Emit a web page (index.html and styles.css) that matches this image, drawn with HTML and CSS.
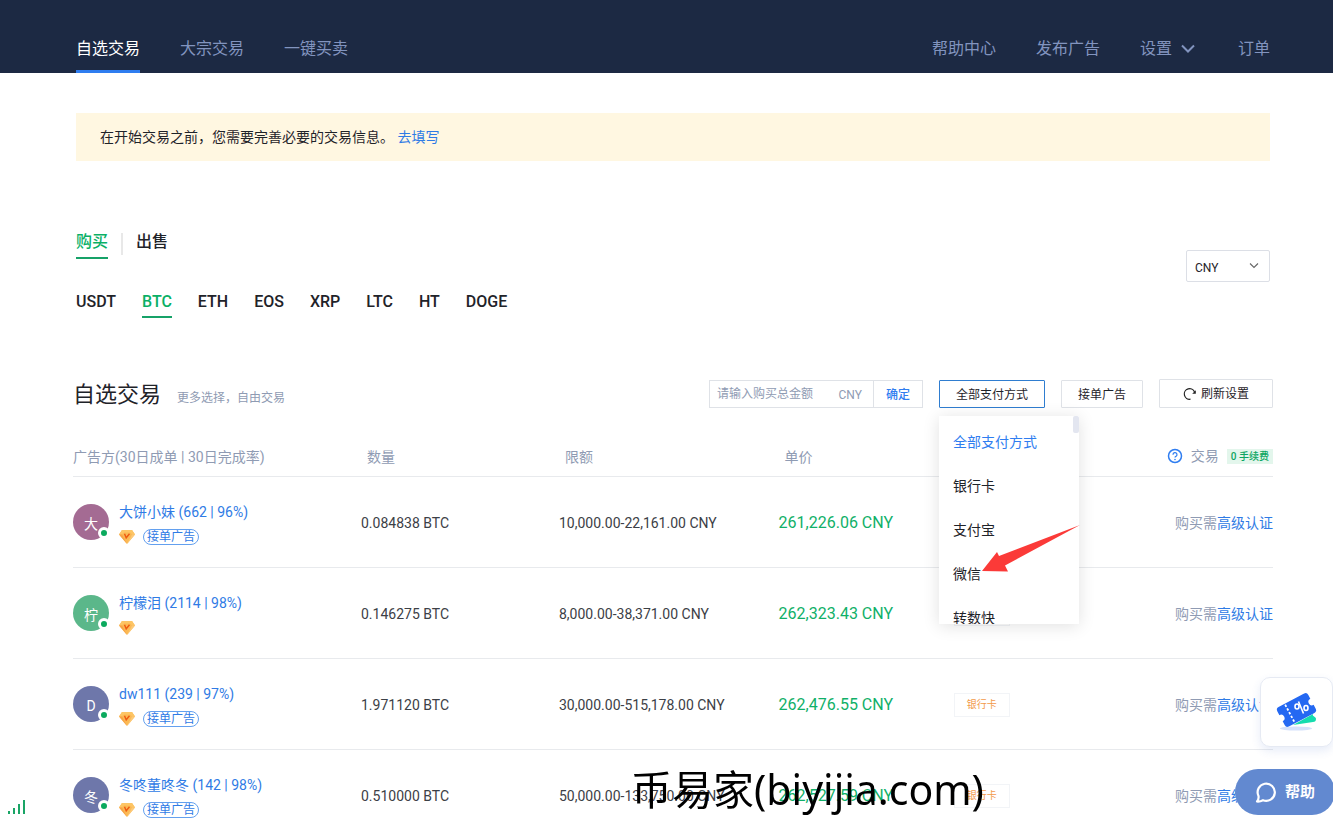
FILE: index.html
```html
<!DOCTYPE html>
<html lang="zh-CN">
<head>
<meta charset="utf-8">
<title>自选交易</title>
<meta name="viewport" content="width=device-width, initial-scale=1">
<link rel="stylesheet" href="styles.css">
</head>
<body>
<svg class="sprite" aria-hidden="true">
  <symbol id="gem" viewBox="0 0 16 16">
    <path d="M3 1h10L16 5.500 8 15 0 5.500z" fill="#fbb954"/>
    <path d="M3 1h10L16 5.500h-3L11 3.500H5L3 5.500H0z" fill="#fdc565"/>
    <path d="M0 5.500h3L8 15z" fill="#f6a347"/>
    <path d="M16 5.500h-3L8 15z" fill="#fcc978"/>
    <path d="M5.500 4.800l1.700 4 3.300-4" fill="none" stroke="#ee5a12" stroke-width="1.400"/>
  </symbol>
</svg>

<header class="topbar">
  <nav class="nav">
    <a class="nav-link active" href="#">自选交易</a>
    <a class="nav-link" href="#">大宗交易</a>
    <a class="nav-link" href="#">一键买卖</a>
  </nav>
  <nav class="nav">
    <a class="nav-link" href="#">帮助中心</a>
    <a class="nav-link" href="#">发布广告</a>
    <a class="nav-link" href="#">设置<svg class="nav-arrow" viewBox="0 0 18 16"><path d="M2 4.500l6 6 6-6" fill="none" stroke="currentColor" stroke-width="2"/></svg></a>
    <a class="nav-link" href="#">订单</a>
  </nav>
</header>

<main>
  <div class="intro">
    <p class="notice">在开始交易之前，您需要完善必要的交易信息。 <a href="#">去填写</a></p>
    <div class="market">
      <div class="market-tabs">
        <div class="sides">
          <button class="tab active" type="button">购买</button>
          <span class="side-split"></span>
          <button class="tab" type="button">出售</button>
        </div>
        <div class="coins">
          <button class="tab" type="button">USDT</button>
          <button class="tab active" type="button">BTC</button>
          <button class="tab" type="button">ETH</button>
          <button class="tab" type="button">EOS</button>
          <button class="tab" type="button">XRP</button>
          <button class="tab" type="button">LTC</button>
          <button class="tab" type="button">HT</button>
          <button class="tab" type="button">DOGE</button>
        </div>
      </div>
      <div class="currency">
        <select aria-label="法币"><option>CNY</option></select>
        <svg viewBox="0 0 12 12"><path d="M2 3.500L6 7.500l4-4" fill="none" stroke="#666" stroke-width="1.100"/></svg>
      </div>
    </div>
  </div>

  <section class="list">
    <div class="list-head">
      <h1>自选交易</h1>
      <span class="subtitle">更多选择，自由交易</span>
      <div class="filters">
        <form class="amount">
          <input type="text" aria-label="购买总金额" placeholder="请输入购买总金额">
          <span class="unit">CNY</span>
          <button type="button">确定</button>
        </form>
        <div class="pay">
          <button class="btn selected" type="button">全部支付方式</button>
          <div class="menu">
            <button class="menu-item active" type="button">全部支付方式</button>
            <button class="menu-item" type="button">银行卡</button>
            <button class="menu-item" type="button">支付宝</button>
            <button class="menu-item" type="button">微信</button>
            <button class="menu-item" type="button">转数快</button>
            <span class="menu-thumb"></span>
          </div>
          <svg class="pointer" viewBox="0 0 98 48"><path d="M98 0L17 31 15 27 0 46l26 .5-3-6z" fill="#fb3a38"/></svg>
        </div>
        <button class="btn" type="button">接单广告</button>
        <button class="btn refresh" type="button"><svg viewBox="0 0 14 14"><path d="M7.500 12.200A5.300 5.300 0 1 1 11.600 5.200" fill="none" stroke="#222" stroke-width="1.200"/><path d="M12.800 3.200v3.600H9.200z" fill="#222"/></svg>刷新设置</button>
      </div>
    </div>

    <table class="ads">
      <colgroup><col class="c-user"><col class="c-qty"><col class="c-limit"><col class="c-price"><col class="c-pay"><col class="c-trade"></colgroup>
      <thead>
        <tr>
          <th>广告方(30日成单 | 30日完成率)</th><th>数量</th><th>限额</th><th>单价</th><th>支付方式</th>
          <th><span class="trade-head"><svg viewBox="0 0 16 16"><circle cx="8" cy="8" r="6.500" fill="none" stroke="#2f7df0" stroke-width="1.500"/><path d="M6 6.700a2 2 0 1 1 2.900 1.700Q8 8.800 8 9.600" fill="none" stroke="#2f7df0" stroke-width="1.200"/><circle cx="8" cy="11.500" r=".8" fill="#2f7df0"/></svg>交易<span class="fee">0 手续费</span></span></th>
        </tr>
      </thead>
      <tbody>
        <tr>
          <td><div class="user"><span class="avatar plum">大</span><div class="who"><a href="#">大饼小妹 (662 | 96%)</a><div class="marks"><svg><use href="#gem"/></svg><span class="badge">接单广告</span></div></div></div></td>
          <td>0.084838 BTC</td><td>10,000.00-22,161.00 CNY</td><td class="price">261,226.06 CNY</td><td><span class="method">银行卡</span></td>
          <td class="trade">购买需<a href="#">高级认证</a></td>
        </tr>
        <tr>
          <td><div class="user"><span class="avatar green">柠</span><div class="who"><a href="#">柠檬泪 (2114 | 98%)</a><div class="marks"><svg><use href="#gem"/></svg></div></div></div></td>
          <td>0.146275 BTC</td><td>8,000.00-38,371.00 CNY</td><td class="price">262,323.43 CNY</td><td><span class="method">银行卡</span></td>
          <td class="trade">购买需<a href="#">高级认证</a></td>
        </tr>
        <tr>
          <td><div class="user"><span class="avatar">D</span><div class="who"><a href="#">dw111 (239 | 97%)</a><div class="marks"><svg><use href="#gem"/></svg><span class="badge">接单广告</span></div></div></div></td>
          <td>1.971120 BTC</td><td>30,000.00-515,178.00 CNY</td><td class="price">262,476.55 CNY</td><td><span class="method">银行卡</span></td>
          <td class="trade">购买需<a href="#">高级认证</a></td>
        </tr>
        <tr>
          <td><div class="user"><span class="avatar">冬</span><div class="who"><a href="#">冬咚董咚冬 (142 | 98%)</a><div class="marks"><svg><use href="#gem"/></svg><span class="badge">接单广告</span></div></div></div></td>
          <td>0.510000 BTC</td><td>50,000.00-133,750.00 CNY</td><td class="price">262,527.59 CNY</td><td><span class="method">银行卡</span></td>
          <td class="trade">购买需<a href="#">高级认证</a></td>
        </tr>
      </tbody>
    </table>
  </section>
</main>

<svg class="signal" viewBox="0 0 18 14"><path d="M0 11h2v3H0zM5 8h2v6H5zM10 4h2v10h-2zM15 0h2v14h-2z" fill="#1aa566"/></svg>
<div class="watermark">币易家(biyijia.com)</div>
<button class="coupon" type="button" aria-label="优惠券">
  <svg viewBox="0 0 44 40">
    <ellipse cx="21" cy="36.500" rx="16" ry="2" fill="#d5e1fb"/>
    <path d="M18 33l20-11c-1 3 3 2 3 5 0 2-1 3-3 3z" fill="#15dcae"/>
    <g transform="rotate(-28 21.500 18)">
      <path d="M7 7h29q3 0 3 3v4.500a3.500 3.500 0 0 0 0 7V26q0 3-3 3H7q-3 0-3-3v-4.500a3.500 3.500 0 0 0 0-7V10q0-3 3-3z" fill="#2468f2"/>
      <path d="M14 8v20" stroke="#fff" stroke-width="1.800" stroke-dasharray="2.400 1.800" fill="none"/>
    </g>
    <g fill="none" stroke="#fff" stroke-width="1.600"><path d="M23.500 9.500l5 12"/><ellipse cx="22" cy="14.500" rx="2" ry="2.500"/><ellipse cx="31" cy="16" rx="2" ry="2.500"/></g>
  </svg>
</button>
<button class="help" type="button"><svg viewBox="0 0 22 22"><path d="M3.500 15A8.600 8.600 0 1 1 8 19.200Q5 20.800 2 20.500q2-2.300 1.500-5.500z" fill="none" stroke="#fff" stroke-width="2.200" stroke-linejoin="round"/></svg>帮助</button>
</body>
</html>
```
FILE: styles.css
```css
*, *::after { box-sizing: border-box; }
body {
  margin: 0;
  height: 100vh;
  overflow: hidden;
  background: #fff;
  color: #1f2329;
  font: 14px/20px Roboto, "Noto Sans CJK SC", sans-serif;
}
a { color: #2f7be5; text-decoration: none; }
button, input, select { font: inherit; color: inherit; background: none; border: 0; padding: 0; margin: 0; }
button { cursor: pointer; }
.sprite { position: absolute; width: 0; height: 0; }

.topbar {
  display: flex;
  justify-content: space-between;
  align-items: flex-end;
  height: 73px;
  padding: 0 63px 0 76px;
  background: #1c2943;
}
.nav { display: flex; gap: 40px; }
.nav-link {
  display: flex;
  align-items: center;
  height: 45px;
  border-bottom: 3px solid transparent;
  color: #8294bf;
  font-size: 16px;
  line-height: 24px;
}
.nav-link.active { color: #fff; border-color: #2f7df0; }
.nav-arrow { width: 18px; height: 16px; margin-left: 8px; }

.intro { padding: 40px 63px 0 76px; }
.notice { margin: 0; padding: 14px 24px; background: #fff7e1; }
.market { display: flex; justify-content: space-between; padding-top: 68px; }
.sides, .coins { display: flex; }
.tab {
  height: 30px;
  border-bottom: 2px solid transparent;
  font-size: 16px;
  line-height: 24px;
  font-weight: 500;
  padding-bottom: 2px;
}
.tab.active { color: #0ab066; border-color: #16a268; }
.side-split { width: 2px; height: 22px; margin: 4px 13px 0; background: #e8e8e8; }
.coins { gap: 26px; margin-top: 29px; }
.coins .tab { padding-bottom: 0; }
.currency { position: relative; width: 84px; height: 32px; margin-top: 21px; }
.currency select {
  width: 100%;
  height: 100%;
  padding: 3px 8px 0;
  appearance: none;
  border: 1px solid #dcdfe6;
  border-radius: 2px;
  font-size: 12px;
}
.currency svg { position: absolute; right: 10px; top: 10px; width: 12px; height: 12px; pointer-events: none; }

.list { padding: 61px 60px 0 73px; }
.list-head { display: flex; align-items: flex-end; height: 29px; }
h1 { margin: 0; font-size: 22px; line-height: 26px; font-weight: 400; }
.subtitle { margin-left: 16px; color: #8f9bb3; font-size: 12px; }
.filters { display: flex; align-items: flex-end; gap: 16px; margin-left: auto; font-size: 12px; }
.amount { display: flex; align-items: center; width: 214px; height: 28px; border: 1px solid #dfe2e7; color: #8f9bb3; }
.amount input { flex: 1; min-width: 0; padding-left: 7px; }
.amount input::placeholder { color: #8f9bb3; opacity: 1; }
.unit { padding: 2px 11px 0; }
.amount button { width: 49px; height: 100%; padding-top: 2px; border-left: 1px solid #dfe2e7; color: #2f7df0; font-weight: 500; }
.btn { height: 28px; padding: 2px 16px 0; border: 1px solid #dfe2e7; border-radius: 1px; background: #fff; }
.btn.selected { border-color: #2f7dd0; }
.btn.refresh { display: flex; align-items: center; justify-content: center; height: 29px; width: 114px; padding: 0; gap: 4px; }
.refresh svg { width: 14px; height: 14px; }
.pay { position: relative; width: 106px; }
.pay .btn { display: block; width: 100%; }
.menu {
  position: absolute;
  z-index: 2;
  top: 36px;
  left: 0;
  width: 140px;
  height: 208px;
  padding-top: 4px;
  overflow: hidden;
  background: #fff;
  box-shadow: 0 2px 16px rgba(0, 0, 0, .12);
}
.menu-item { display: block; width: 100%; height: 44px; padding: 0 14px; text-align: left; font-size: 14px; }
.menu-item.active { color: #2f7df0; }
.menu-thumb { position: absolute; top: 0; right: 0; width: 6px; height: 17px; background: #e3e6f0; border-radius: 2px; }
.pointer { position: absolute; z-index: 3; top: 145px; left: 43px; width: 98px; height: 48px; }

.ads { width: 100%; margin-top: 29px; border-collapse: collapse; table-layout: fixed; }
.c-user { width: 24%; }
.c-qty { width: 16.5%; }
.c-limit { width: 18.3%; }
.c-price { width: 14.6%; }
.c-pay { width: 12%; }
.ads th, .ads td { padding: 0; text-align: left; border-bottom: 1px solid #e8eaed; white-space: nowrap; }
.ads th { height: 39px; padding-top: 2px; color: #8f9bb3; font-weight: 400; }
.ads th:last-child { padding-top: 0; }
.ads th:not(:first-child) { padding-left: 6px; }
.ads td { height: 91px; padding-top: 2px; color: #3c4046; }
.ads td:first-child { padding-top: 0; }
.ads .price { padding-top: 3px; color: #10b068; font-size: 16px; }
.ads .trade { text-align: right; color: #8f9bb3; }
.trade-head { display: flex; align-items: center; justify-content: flex-end; gap: 8px; }
.trade-head svg { width: 16px; height: 16px; }
.fee { padding: 0 4px; background: #e3f6ec; color: #0ba561; font-size: 10px; line-height: 15px; font-weight: 500; }
.user { display: flex; align-items: center; gap: 10px; }
.who { padding-top: 4px; }
.avatar {
  position: relative;
  width: 36px;
  height: 36px;
  padding-top: 2px;
  border-radius: 50%;
  background: #6e77aa;
  color: #fff;
  line-height: 36px;
  text-align: center;
}
.avatar.plum { background: #a46b93; }
.avatar.green { background: #5bb78a; }
.avatar::after {
  content: "";
  position: absolute;
  right: -1px;
  bottom: 1px;
  width: 12px;
  height: 12px;
  border: 3px solid #fff;
  border-radius: 50%;
  background: #0baa5e;
}
.marks { display: flex; align-items: center; gap: 8px; height: 16px; margin-top: 7px; }
.marks svg { width: 16px; height: 16px; }
.badge { padding: 0 3px; border: 1px solid #63a0ef; border-radius: 8px; color: #2f7be5; font-size: 12px; line-height: 14px; }
.method { display: inline-block; padding: 0 12px; border: 1px solid #f2f4f7; color: #f29a4a; font-size: 10px; line-height: 22px; }

.signal { position: fixed; left: 8px; bottom: 5px; width: 18px; height: 14px; }
.watermark {
  position: fixed;
  z-index: 4;
  left: 0;
  right: 0;
  bottom: 0;
  padding-left: 282px;
  text-align: center;
  color: #000;
  font: 41px/60px "Noto Sans", "Noto Sans CJK SC", sans-serif;
  pointer-events: none;
}
.coupon {
  position: fixed;
  right: 0;
  bottom: 72px;
  display: grid;
  place-items: center;
  width: 73px;
  height: 70px;
  border: 1px solid #e6eaf3;
  border-radius: 10px;
  background: #fff;
  box-shadow: 0 4px 10px rgba(60, 100, 200, .12);
}
.coupon svg { width: 44px; height: 40px; }
.help {
  position: fixed;
  right: -2px;
  bottom: 4px;
  display: flex;
  align-items: center;
  gap: 8px;
  height: 46px;
  padding: 0 20px;
  border-radius: 23px;
  background: #6289d0;
  color: #fff;
  font-size: 15px;
  font-weight: 700;
}
.help svg { width: 22px; height: 22px; }
```
